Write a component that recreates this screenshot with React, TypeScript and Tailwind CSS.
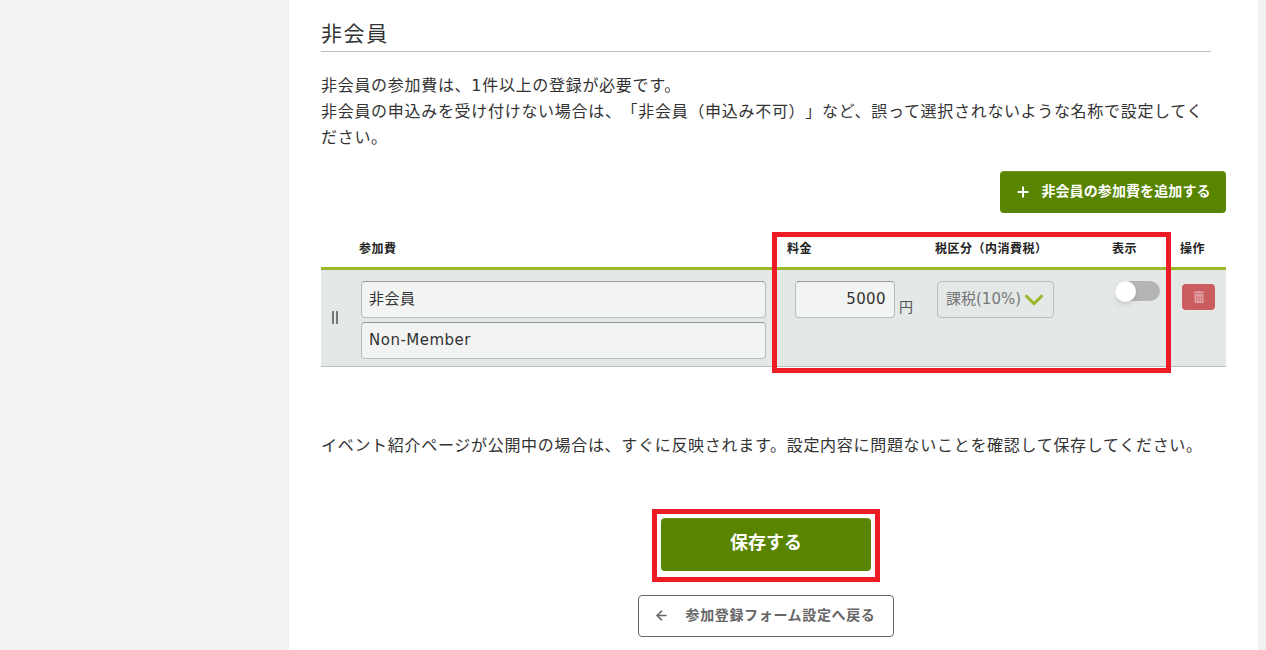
import React from 'react';
import { ArrowLeft, ChevronDown, Plus } from 'lucide-react';
import { FaTrashAlt } from 'react-icons/fa';

const fontStack = "font-['DejaVu_Sans','Noto_Sans_CJK_JP',sans-serif]";

const App: React.FC = () => {
  return (
    <div className={`relative h-[650px] w-[1266px] overflow-hidden bg-[#f2f2f2] text-[#333] [text-spacing-trim:space-all] ${fontStack}`}>
      <main className="ml-[289px] h-full w-[969px] bg-white pl-8 pr-8 pt-[17px]">
        <h2 className="w-[890px] border-b border-[#b8bfbc] pt-[2px] pb-[1px] text-[21px] leading-[31px] tracking-[1.6px]">非会員</h2>

        <p className="mt-[21px] w-[890px] text-[16px] leading-[26px] tracking-[0.7px]">
          非会員の参加費は、1件以上の登録が必要です。<br />
          非会員の申込みを受け付けない場合は、「非会員（申込み不可）」など、誤って選択されないような名称で設定してください。
        </p>

        <div className="mt-[20px] flex w-[905px] justify-end">
          <button className="flex h-[42px] w-[226px] items-center justify-center gap-[10px] rounded-[4px] border-t border-[#6f9420] bg-[#588400] pb-[2px] text-[14px] font-bold tracking-[0.1px] text-white">
            <Plus size={16} strokeWidth={3} />
            非会員の参加費を追加する
          </button>
        </div>

        <div className="mt-[16px] w-[905px]">
          <div className="flex h-[41px] items-center border-b-[3px] border-[#9ab82e] pt-[1px] text-[12px] font-bold tracking-[0.5px] text-[#222]">
            <span className="ml-[38px] w-[428px]">参加費</span>
            <span className="w-[148px]">料金</span>
            <span className="w-[177px]">税区分（内消費税）</span>
            <span className="w-[68px]">表示</span>
            <span>操作</span>
          </div>
          <div className="flex h-[97px] border-b border-[#b8bfbc] bg-[#e4e8e7]">
            <div className="flex w-[40px] items-center gap-[2px] pl-[11px] pb-[1px]">
              <div className="h-[13px] w-[2px] bg-[#777]" />
              <div className="h-[13px] w-[2px] bg-[#777]" />
            </div>
            <div className="flex w-[405px] flex-col gap-[4px] pt-[11px]">
              <div className="flex h-[37px] items-center rounded-[4px] border border-[#b8bfbc] border-t-[#999] bg-[#f2f4f3] pl-[7px] text-[15px] tracking-[0.5px]">非会員</div>
              <div className="flex h-[37px] items-center rounded-[4px] border border-[#b8bfbc] border-t-[#999] bg-[#f2f4f3] pl-[7px] text-[15px] tracking-[0.5px]">Non-Member</div>
            </div>
            <div className="ml-[29px] flex pt-[11px]">
              <div className="flex h-[37px] w-[100px] items-center justify-end rounded-[4px] border border-[#b8bfbc] border-t-[#999] bg-[#f2f4f3] pr-2 text-[15px] tracking-[0.4px]">5000</div>
              <span className="ml-1 mt-[16px] text-[14px] text-[#555]">円</span>
            </div>
            <div className="ml-[24px] pt-[11px]">
              <div className="flex h-[37px] w-[117px] items-center rounded-[4px] border border-[#b8bfbc] bg-[#e4e8e7] pl-2 text-[15px] text-[#777]">
                課税(10%)
                <ChevronDown size={30} strokeWidth={2.5} className="-ml-[2px] shrink-0 text-[#9ab82e]" />
              </div>
            </div>
            <div className="ml-[61px] pt-[11px]">
              <div className="relative h-[20px] w-[45px] rounded-full bg-[#b5b5b5]">
                <div className="absolute top-0 left-0 h-[21px] w-[21px] rounded-full bg-white shadow-md" />
              </div>
            </div>
            <div className="ml-[22px] pt-[14px]">
              <div className="flex h-[26px] w-[33px] items-center justify-center rounded-[4px] bg-[#cb5c60]">
                <FaTrashAlt size={12} className="text-[#e0a0a2]" />
              </div>
            </div>
          </div>
        </div>

        <p className="mt-[66px] w-[905px] text-[16px] leading-[26px] tracking-[0.7px]">イベント紹介ページが公開中の場合は、すぐに反映されます。設定内容に問題ないことを確認して保存してください。</p>

        <div className="mt-[59px] flex w-[890px] flex-col items-center">
          <button className="h-[53px] w-[210px] rounded-[4px] border-t border-[#6f9420] bg-[#588400] pb-[5px] text-[18px] font-bold text-white">保存する</button>
          <button className="mt-[24px] flex h-[42px] w-[256px] items-center justify-center gap-[16px] rounded-[4px] border border-[#666] bg-white pb-[2px] pr-[2px] text-[14px] font-bold tracking-[0.65px] text-[#666]">
            <ArrowLeft size={15} strokeWidth={2.5} />
            参加登録フォーム設定へ戻る
          </button>
        </div>
      </main>

      {/* red annotation frames */}
      <div className="absolute left-[772px] top-[232px] h-[141px] w-[399px] border-[5px] border-[#ed1c24]" />
      <div className="absolute left-[652px] top-[509px] h-[73px] w-[228px] border-[5px] border-[#ed1c24]" />
    </div>
  );
};

export default App;
